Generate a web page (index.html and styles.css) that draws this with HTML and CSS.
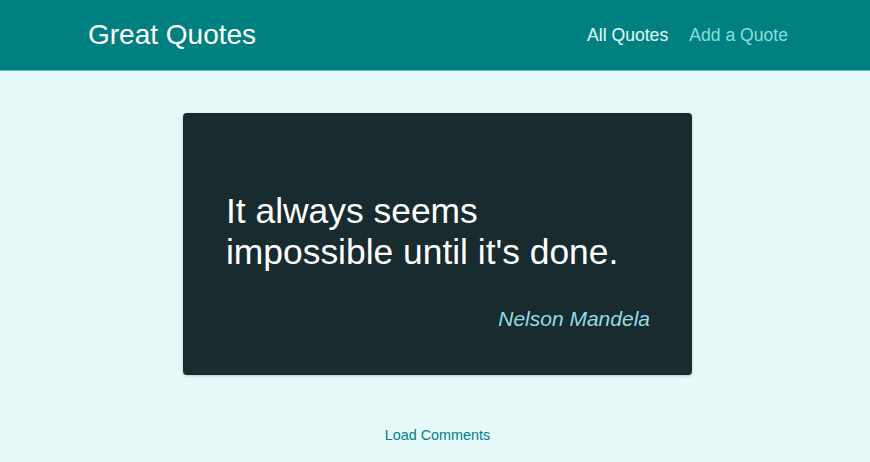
FILE: index.html
```html
<!DOCTYPE html>
<html lang="en">
<head>
<meta charset="utf-8">
<title>Great Quotes</title>
<link rel="stylesheet" href="styles.css">
</head>
<body>
<header class="header">
  <div class="logo">Great Quotes</div>
  <nav class="nav">
    <a class="nav-link active" href="#">All Quotes</a>
    <a class="nav-link" href="#">Add a Quote</a>
  </nav>
</header>
<main class="main">
  <figure class="quote">
    <p class="quote-text">It always seems impossible until it's done.</p>
    <figcaption class="quote-author">Nelson Mandela</figcaption>
  </figure>
  <div class="comments">
    <button class="btn-flat">Load Comments</button>
  </div>
</main>
</body>
</html>
```

FILE: styles.css
```css
* { box-sizing: border-box; }
html, body {
  margin: 0;
  padding: 0;
}
body {
  font-family: "Liberation Sans", Arial, sans-serif;
  background: #e6f8f8;
  height: 462px;
  overflow: hidden;
}
.header {
  height: 71px;
  background: #008080;
  border-bottom: 1px solid #5cbcbc;
  display: flex;
  align-items: center;
  justify-content: space-between;
  padding: 0 82px 0 88px;
}
.logo {
  font-size: 28px;
  color: #ffffff;
}
.nav {
  display: flex;
  gap: 21px;
}
.nav-link {
  font-size: 17.6px;
  color: #88dfdf;
  text-decoration: none;
}
.nav-link.active {
  color: #e6fcfc;
}
.main {
  display: flex;
  flex-direction: column;
  align-items: center;
  padding-left: 5px;
}
.quote {
  margin: 42px 0 0 0;
  width: 509px;
  height: 262px;
  background: #182b2e;
  border-radius: 4px;
  padding: 43px 42px 43px 43px;
  box-shadow: 0 1px 3px rgba(0,0,0,0.2);
}
.quote-text {
  font-size: 35.4px;
  line-height: 41px;
  color: #ffffff;
  margin: 35px 0 34px 0;
  max-width: 410px;
}
.quote-author {
  font-size: 21px;
  font-style: italic;
  color: #8fdde6;
  text-align: right;
}
.comments {
  margin-top: 52px;
  display: flex;
  justify-content: center;
}
.btn-flat {
  border: none;
  background: none;
  font-family: "Liberation Sans", Arial, sans-serif;
  font-size: 14.4px;
  color: #00808a;
  padding: 0;
  cursor: pointer;
}
```
